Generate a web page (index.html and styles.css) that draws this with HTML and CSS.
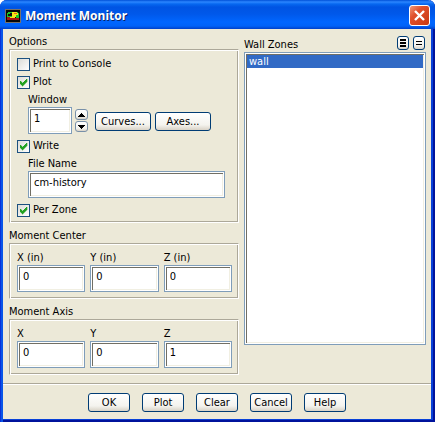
FILE: index.html
```html
<!DOCTYPE html>
<html lang="en">
<head>
<meta charset="utf-8">
<title>Moment Monitor</title>
<link rel="stylesheet" href="styles.css">
</head>
<body>
<form class="window">
  <header class="titlebar">
    <svg class="app-icon" viewBox="0 0 16 14" aria-hidden="true" shape-rendering="crispEdges">
      <rect width="16" height="14" fill="#77716a"/>
      <rect x="1" y="1" width="14" height="12" fill="#080808"/>
      <path d="M2 4h1V3h10v1h1v5h-3V8H8v1H5V8H2z" fill="#18c828"/>
      <path d="M7 3h5v1h1v2h-2v2H7z" fill="#f4e818"/>
      <path d="M3 5h2V4h2v3H3z" fill="#101010"/>
      <path d="M9 4h3v1H9z" fill="#f06818"/>
      <path d="M2 8h3v1h9v2H2z" fill="#a81410"/>
      <path d="M5 8h5v1H5z" fill="#f8e020"/>
    </svg>
    <h1 class="title">Moment Monitor</h1>
    <button class="close" type="button" aria-label="Close">
      <svg viewBox="0 0 19 19" aria-hidden="true"><path d="M5 5l9 9M14 5l-9 9" stroke="#fff" stroke-width="2.4"/></svg>
    </button>
  </header>
  <main class="content">
    <div class="column">
      <section class="group">
        <h2 class="caption">Options</h2>
        <div class="frame options">
          <label class="check"><input type="checkbox">Print to Console</label>
          <label class="check"><input type="checkbox" checked>Plot</label>
          <div class="indent">
            <label class="caption" for="window">Window</label>
            <div class="plot-row">
              <input class="text window-no" id="window" type="text" value="1">
              <div class="spinner">
                <button type="button" aria-label="Increase"><svg viewBox="0 0 7 4" shape-rendering="crispEdges"><path d="M3 0h1v1h1v1h1v1h1v1H0V3h1V2h1V1h1z"/></svg></button>
                <button type="button" aria-label="Decrease"><svg viewBox="0 0 7 4" shape-rendering="crispEdges"><path d="M0 0h7v1H6v1H5v1H4v1H3V3H2V2H1V1H0z"/></svg></button>
              </div>
              <button class="button wide" type="button">Curves...</button>
              <button class="button wide" type="button">Axes...</button>
            </div>
          </div>
          <label class="check"><input type="checkbox" checked>Write</label>
          <div class="indent">
            <label class="caption" for="file">File Name</label>
            <input class="text" id="file" type="text" value="cm-history">
          </div>
          <label class="check"><input type="checkbox" checked>Per Zone</label>
        </div>
      </section>
      <section class="group">
        <h2 class="caption">Moment Center</h2>
        <div class="frame triple">
          <label class="field">X (in)<input class="text" type="text" value="0"></label>
          <label class="field">Y (in)<input class="text" type="text" value="0"></label>
          <label class="field">Z (in)<input class="text" type="text" value="0"></label>
        </div>
      </section>
      <section class="group">
        <h2 class="caption">Moment Axis</h2>
        <div class="frame triple">
          <label class="field">X<input class="text" type="text" value="0"></label>
          <label class="field">Y<input class="text" type="text" value="0"></label>
          <label class="field">Z<input class="text" type="text" value="1"></label>
        </div>
      </section>
    </div>
    <section class="zones">
      <div class="zones-head">
        <label class="caption" for="zones">Wall Zones</label>
        <button class="mini" type="button" aria-label="Select all"><svg viewBox="0 0 6 8" shape-rendering="crispEdges"><path d="M0 0h6v2H0zM0 3h6v2H0zM0 6h6v2H0z"/></svg></button>
        <button class="mini" type="button" aria-label="Deselect all"><svg viewBox="0 0 6 8" shape-rendering="crispEdges"><path d="M0 2h6v1H0zM0 5h6v1H0z"/></svg></button>
      </div>
      <select class="list" id="zones" size="20" multiple>
        <option selected>wall</option>
      </select>
    </section>
  </main>
  <footer class="actions">
    <button class="button" type="button">OK</button>
    <button class="button" type="button">Plot</button>
    <button class="button" type="button">Clear</button>
    <button class="button" type="button">Cancel</button>
    <button class="button" type="button">Help</button>
  </footer>
</form>
</body>
</html>
```
FILE: styles.css
```css
* { box-sizing: border-box; }

body {
  margin: 0;
  background: #fff;
  color: #000;
  font: 11px/14px "DejaVu Sans Condensed", "Noto Sans", sans-serif;
}

button, input, select { font: inherit; color: inherit; margin: 0; }
svg { display: block; }

.window {
  display: flex;
  flex-direction: column;
  min-height: 100vh;
  padding: 0 4px 3px 3px;
  background: #ece9d8;
  border-radius: 7px 7px 0 0;
  box-shadow: inset 1px 0 #0831d9, inset 3px 0 #0855e8, inset -2px -2px #00139c, inset -4px -3px #0841d8;
}

.titlebar {
  display: flex;
  align-items: center;
  gap: 4px;
  height: 29px;
  margin: 0 -4px 0 -3px;
  padding: 2px 5px 0;
  border-radius: 7px 7px 0 0;
  background: linear-gradient(#0050d8 0, #2c86ff 2px, #0768f0 4px, #0054e3 7px, #0058ea 14px, #0066ff 22px, #0062f8 26px, #0040c8 29px);
}

.app-icon { width: 16px; height: 14px; }

.title {
  flex: 1;
  margin: 0;
  color: #fff;
  font: bold 12px/18px "Noto Sans", sans-serif;
  text-shadow: 1px 1px #0a246a;
}

.close {
  width: 21px;
  height: 21px;
  padding: 0;
  border: 1px solid #fff;
  border-radius: 3px;
  background: linear-gradient(135deg, #f09878, #e0502c 35%, #c83810);
}

.close svg { width: 19px; height: 19px; }

.content {
  flex: 1;
  display: grid;
  grid-template-columns: 230fr 182fr;
  gap: 5px;
  padding: 6px 5px 7px 6px;
}

.group { margin-bottom: 6px; }
.group:last-child { margin-bottom: 0; }

.caption {
  display: block;
  margin: 0;
  font-size: 11px;
  font-weight: normal;
  line-height: 14px;
}

.frame {
  padding: 7px 6px 6px 7px;
  border: 1px solid #aca899;
  border-right-color: #fff;
  border-bottom-color: #fff;
  box-shadow: inset 1px 1px #fff, inset -1px -1px #aca899;
}

.options { padding: 7px 7px 5px; }

.check { display: flex; align-items: center; gap: 3px; height: 14px; }
.check + .check { margin-top: 4px; }
.indent + .check { margin-top: 5px; }

.check input {
  appearance: none;
  width: 13px;
  height: 13px;
  border: 1px solid #1c5180;
  background: linear-gradient(135deg, #dcdcd7, #fff);
}

.check input:checked {
  background: url("data:image/svg+xml,%3Csvg xmlns='http://www.w3.org/2000/svg' width='11' height='11' viewBox='0 0 11 11' shape-rendering='crispEdges'%3E%3Cpath d='M2 4h1v1h1v1h1V5h1V4h1V3h1V2h1v3H8v1H7v1H6v1H5v1H4V8H3V7H2z' fill='%2321a121' stroke='%2321a121' stroke-width='.3'/%3E%3C/svg%3E") center / 11px 11px no-repeat, linear-gradient(135deg, #dcdcd7, #fff);
}

.indent { margin: 4px 6px 0 11px; }

.plot-row { display: flex; align-items: center; }

.text {
  display: block;
  width: 100%;
  height: 27px;
  padding: 0 6px 5px 5px;
  border: 1px solid #7f9db9;
  border-radius: 0;
  outline: 0;
  background: #fff;
  box-shadow: inset 1px 1px #fff, inset -1px -1px #fff, inset 2px 2px #716f64, inset -2px -2px #f1efe2;
}

.window-no { width: 44px; }

.spinner { display: grid; gap: 1px; margin: 0 7px 0 3px; }

.button, .mini, .spinner button {
  border: 1px solid #003c74;
  border-radius: 3px;
  background: linear-gradient(#fff, #f4f3ee 70%, #d8d2c6);
}

.spinner button {
  display: grid;
  place-items: center;
  width: 13px;
  height: 11px;
  padding: 0;
  border-color: #7890a8;
}

.spinner svg { width: 7px; height: 4px; }

.button { width: 42px; height: 19px; padding: 0; line-height: 16px; white-space: nowrap; }
.wide { width: 56px; margin-top: 2px; }
.wide + .wide { margin-left: 4px; }

.triple { display: grid; grid-template-columns: repeat(3, 1fr); gap: 5px; }
.field { line-height: 14px; }

.zones { display: flex; flex-direction: column; }

.zones-head { display: flex; align-items: center; gap: 4px; height: 16px; padding-right: 1px; margin-bottom: 1px; }
.zones-head .caption { flex: 1; padding-top: 3px; }

.mini {
  display: grid;
  place-items: center;
  width: 12px;
  height: 14px;
  padding: 0;
}

.mini svg { width: 6px; height: 8px; }

.list {
  flex: 1;
  width: 100%;
  margin-bottom: 31px;
  padding: 2px;
  border: 1px solid #7f9db9;
  border-radius: 0;
  outline: 0;
  overflow: hidden;
  background: #fff;
  box-shadow: inset 1px 1px #fff, inset -1px -1px #fff, inset 2px 2px #716f64, inset -2px -2px #f1efe2;
}

.list option { min-height: 13px; padding: 0 2px; line-height: 13px; }
.list option:checked { color: #fff; background: #316ac5 linear-gradient(#316ac5, #316ac5); }

.actions {
  display: flex;
  justify-content: center;
  gap: 12px;
  padding: 9px 0 7px;
  border-top: 1px solid #aca899;
  box-shadow: inset 0 1px #fff;
}
```
